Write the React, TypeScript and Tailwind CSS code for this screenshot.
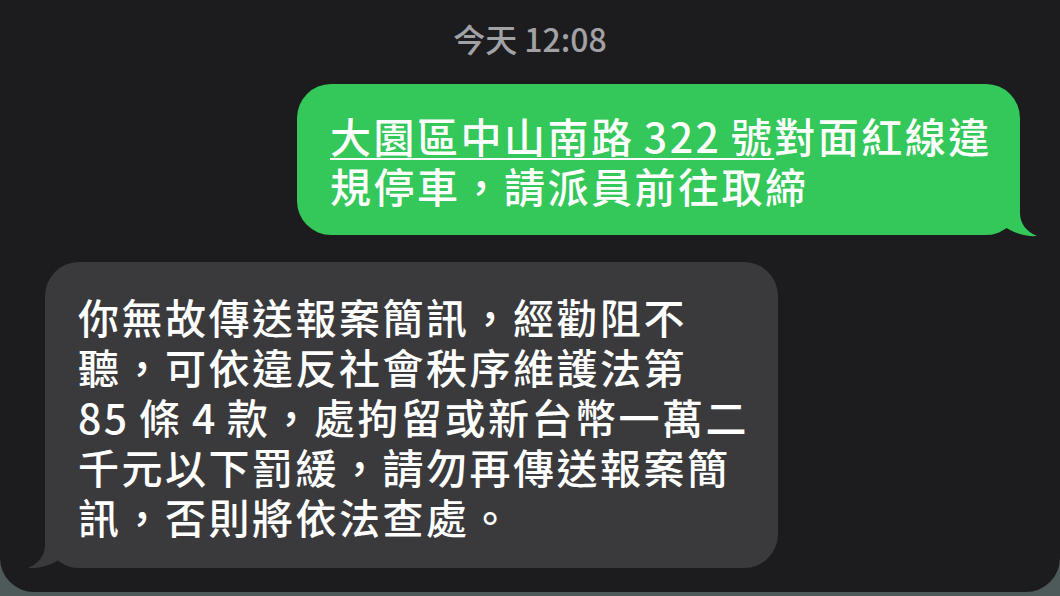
const font = { fontFamily: '"Noto Sans CJK TC", "Noto Sans", sans-serif' };

const TailRight = () => (
  <svg
    className="absolute right-[-20px] bottom-[-2px]"
    width="50"
    height="40"
    viewBox="0 0 50 40"
  >
    <path
      d="M0 0 H30 V16 C30 27 37 35 47 39 C37 40 22 36 12 28 C9 33 5 36 0 38 Z"
      fill="#34c759"
    />
  </svg>
);

const TailLeft = () => (
  <svg
    className="absolute left-[-20px] bottom-[-1px]"
    width="50"
    height="40"
    viewBox="0 0 50 40"
  >
    <g transform="translate(50 0) scale(-1 1)">
      <path
        d="M0 0 H30 V16 C30 27 37 35 47 39 C37 40 22 36 12 28 C9 33 5 36 0 38 Z"
        fill="#3a3a3c"
      />
    </g>
  </svg>
);

export default function App() {
  return (
    <div className="w-[1060px] h-[596px] bg-[#4e5a5a] overflow-hidden" style={font}>
      <div className="h-[592px] bg-[#1c1c1e] rounded-b-[34px] flex flex-col">
        <div className="mt-[20px] text-center text-[32px] leading-[36px] font-medium text-[#a1a1a6]">
          今天 12:08
        </div>

        <div className="relative self-end mr-[40px] mt-[28px] w-[723px] rounded-[34px] bg-[#34c759] pl-[33px] pt-[26px] pb-[25px] text-white text-[41px] leading-[50px] tracking-[2.5px] font-medium">
          <span className="underline decoration-2 underline-offset-[5px]">
            {"大園區中山南路\u2006322\u2006號"}
          </span>
          對面紅線違
          <br />
          規停車，請派員前往取締
          <TailRight />
        </div>

        <div className="relative ml-[45px] mt-[27px] w-[733px] rounded-[34px] bg-[#3a3a3c] pl-[33px] pt-[29px] pb-[27px] text-white text-[41px] leading-[50px] tracking-[2.5px] font-medium">
          你無故傳送報案簡訊，經勸阻不
          <br />
          聽，可依違反社會秩序維護法第
          <br />
          {"85\u2006條\u20064\u2006款，處拘留或新台幣一萬二"}
          <br />
          千元以下罰緩，請勿再傳送報案簡
          <br />
          訊，否則將依法查處。
          <TailLeft />
        </div>
      </div>
    </div>
  );
}
